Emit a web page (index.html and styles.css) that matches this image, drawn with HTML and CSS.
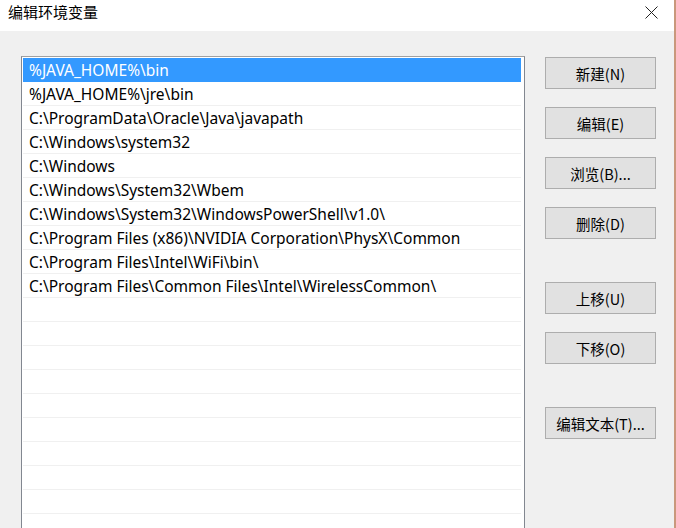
FILE: index.html
```html
<!DOCTYPE html>
<html lang="zh-CN">
<head>
<meta charset="utf-8">
<title>编辑环境变量</title>
<link rel="stylesheet" href="styles.css">
</head>
<body>
<div class="window">
  <div class="titlebar">
    <span class="title">编辑环境变量</span>
    <span class="close" aria-label="关闭">
      <svg width="13" height="13" viewBox="0 0 13 13"><path d="M0.5 0.5 L12.5 12.5 M12.5 0.5 L0.5 12.5" stroke="#222" stroke-width="1" fill="none"/></svg>
    </span>
  </div>
  <div class="content">
    <div class="listbox">
      <div class="row selected">%JAVA_HOME%\bin</div>
      <div class="row">%JAVA_HOME%\jre\bin</div>
      <div class="row">C:\ProgramData\Oracle\Java\javapath</div>
      <div class="row">C:\Windows\system32</div>
      <div class="row">C:\Windows</div>
      <div class="row">C:\Windows\System32\Wbem</div>
      <div class="row">C:\Windows\System32\WindowsPowerShell\v1.0\</div>
      <div class="row">C:\Program Files (x86)\NVIDIA Corporation\PhysX\Common</div>
      <div class="row">C:\Program Files\Intel\WiFi\bin\</div>
      <div class="row">C:\Program Files\Common Files\Intel\WirelessCommon\</div>
      <div class="row"></div>
      <div class="row"></div>
      <div class="row"></div>
      <div class="row"></div>
      <div class="row"></div>
      <div class="row"></div>
      <div class="row"></div>
      <div class="row"></div>
      <div class="row"></div>
      <div class="row"></div>
    </div>
    <div class="buttons">
      <div class="group">
        <button class="btn">新建(N)</button>
        <button class="btn">编辑(E)</button>
        <button class="btn">浏览(B)...</button>
        <button class="btn">删除(D)</button>
      </div>
      <div class="group">
        <button class="btn">上移(U)</button>
        <button class="btn">下移(O)</button>
      </div>
      <div class="group">
        <button class="btn">编辑文本(T)...</button>
      </div>
    </div>
  </div>
</div>
</body>
</html>
```

FILE: styles.css
```css
html, body {
  margin: 0;
  padding: 0;
  background: #f0f0f0;
}
.window {
  width: 676px;
  height: 528px;
  box-sizing: border-box;
  border-right: 2px solid #c9987c;
  background: #f0f0f0;
  overflow: hidden;
  font-family: "Noto Sans", "Noto Sans CJK SC", sans-serif;
  color: #000;
}
.titlebar {
  height: 31px;
  background: #ffffff;
  display: flex;
  align-items: center;
  justify-content: space-between;
  padding: 0 16px 0 8px;
  box-sizing: border-box;
}
.title {
  font-family: "Noto Sans CJK SC", sans-serif;
  font-size: 15px;
  line-height: 1;
  margin-top: -8px;
}
.close {
  display: flex;
  margin-top: -7px;
}
.content {
  display: flex;
  padding: 25px 0 0 21px;
}
.listbox {
  width: 504px;
  height: 500px;
  box-sizing: border-box;
  border: 1px solid #828790;
  border-top-color: #a0a0a0;
  background: #ffffff;
  padding: 1px;
  flex: none;
}
.row {
  height: 24px;
  box-sizing: border-box;
  border-bottom: 1px solid #f0f0f0;
  padding: 1px 0 0 6px;
  margin-right: 2px;
  font-size: 15.5px;
  line-height: 22px;
  white-space: nowrap;
}
.row.selected {
  background: #3399ff;
  color: #ffffff;
  border-bottom-color: #3399ff;
}
.buttons {
  margin-left: 20px;
  display: flex;
  flex-direction: column;
  gap: 43px;
  padding-top: 1px;
}
.group {
  display: flex;
  flex-direction: column;
  gap: 18px;
}
.btn {
  width: 111px;
  height: 32px;
  box-sizing: border-box;
  border: 1px solid #adadad;
  background: #e1e1e1;
  font-family: "Noto Sans CJK SC", sans-serif;
  font-size: 14.5px;
  color: #000;
  padding: 0;
  margin: 0;
}
```
